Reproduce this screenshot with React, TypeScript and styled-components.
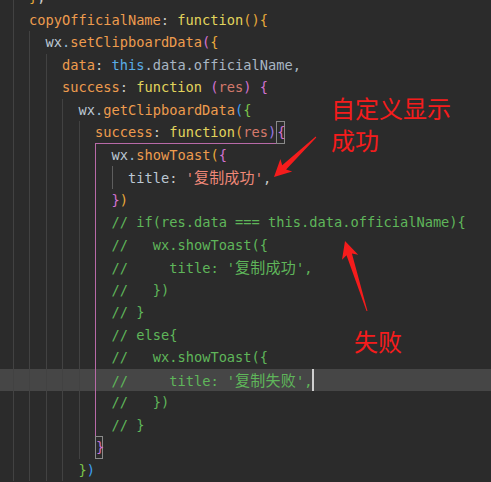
import React from 'react';
import styled, { createGlobalStyle } from 'styled-components';

// editor metrics taken from the screenshot: 8.25px per column, 22.5px per line
const COL = 8.25;
const LINE = 22.5;

const C = {
  prop: '#ee9c4e',
  id: '#bcc8d4',
  dot: '#8fb4d6',
  punc: '#c8c8c8',
  fn: '#e2d45c',
  self: '#59ace6',
  member: '#a8b6c4',
  param: '#d4796c',
  str: '#ef8878',
  cmt: '#5fb65a',
  gold: '#e8a93a',
  orchid: '#d272d2',
  blue: '#3d9ff2',
  green: '#7cc44a',
  violet: '#9a78e6',
};

const GlobalStyle = createGlobalStyle`
  html, body {
    margin: 0;
    padding: 0;
    background: #2b2b2b;
  }
`;

const Editor = styled.div`
  position: relative;
  width: 491px;
  height: 482px;
  overflow: hidden;
  background: #2b2b2b;
  font-family: "DejaVu Sans Mono", "Liberation Mono", "Noto Sans CJK SC", monospace;
  font-size: 13.7px;
  color: ${C.id};
`;

const Lines = styled.div`
  margin-top: -13.75px;
`;

const Row = styled.div<{ $current?: boolean }>`
  display: flex;
  height: ${LINE}px;
  padding-left: 12.5px;
  white-space: pre;
  background: ${p => (p.$current ? '#464646' : 'transparent')};
`;

const Indent = styled.span<{ $tone: 'plain' | 'bright' | 'pair' }>`
  flex: none;
  width: ${COL * 2}px;
  box-sizing: border-box;
  border-left: 1px solid
    ${p => (p.$tone === 'pair' ? '#b86aa8' : p.$tone === 'bright' ? '#5e5e5e' : '#424242')};
`;

const Code = styled.span`
  display: block;
  line-height: ${LINE}px;
`;

const T = styled.span<{ $c: string }>`
  color: ${p => p.$c};
`;

const Cjk = styled.span`
  font-family: "Noto Sans CJK SC", sans-serif;
  font-size: 15px;
  letter-spacing: 0.2px;
`;

const PairHead = styled.span`
  display: inline-block;
  vertical-align: top;
  height: ${LINE}px;
  box-sizing: border-box;
  border-bottom: 1px solid #b86aa8;
`;

const BracketBox = styled.span<{ $c: string }>`
  display: inline-block;
  vertical-align: top;
  width: ${COL}px;
  height: ${LINE}px;
  line-height: ${LINE - 2}px;
  box-sizing: border-box;
  border: 1px solid #8a8a8a;
  color: ${p => p.$c};
  text-align: center;
`;

const Caret = styled.span`
  display: inline-block;
  vertical-align: top;
  width: 2px;
  height: ${LINE}px;
  background: #cfcfcf;
`;

const Overlay = styled.div`
  position: absolute;
  inset: 0;
  pointer-events: none;
`;

const Note = styled.div<{ $x: number; $y: number }>`
  position: absolute;
  left: ${p => p.$x}px;
  top: ${p => p.$y}px;
  font-family: "Noto Sans CJK SC", sans-serif;
  font-size: 24px;
  line-height: 32px;
  color: #f51c1c;
  white-space: pre;
`;

const ArrowSvg = styled.svg`
  position: absolute;
  left: 0;
  top: 0;
`;

type Tone = 'plain' | 'bright' | 'pair';

function Line(props: { n: number; indent: number; current?: boolean; children: React.ReactNode }) {
  const units: Tone[] = [];
  for (let k = 0; k < props.indent / 2; k++) {
    if (k === 5 && props.n >= 7 && props.n <= 19) units.push('pair');
    else if (k === 6 && props.n === 8) units.push('bright');
    else units.push('plain');
  }
  return (
    <Row $current={props.current}>
      {units.map((tone, i) => <Indent key={i} $tone={tone} />)}
      <Code>{props.children}</Code>
    </Row>
  );
}

function arrow(x1: number, y1: number, x2: number, y2: number) {
  const dx = x2 - x1;
  const dy = y2 - y1;
  const len = Math.hypot(dx, dy);
  const ux = dx / len;
  const uy = dy / len;
  const pts: [number, number][] = [
    [0, 0.5], [len - 14, 2.8], [len - 17, 8.5], [len, 0],
    [len - 17, -8.5], [len - 14, -2.8], [0, -0.5],
  ];
  return pts.map(([a, b]) => `${(x1 + ux * a - uy * b).toFixed(1)},${(y1 + uy * a + ux * b).toFixed(1)}`).join(' ');
}

const Wx = ({ call }: { call: string }) => (
  <>
    <T $c={C.id}>wx</T><T $c={C.dot}>.</T><T $c={C.prop}>{call}</T>
  </>
);

export default function App() {
  return (
    <>
      <GlobalStyle />
      <Editor>
        <Lines>
          <Line n={0} indent={2}>
            <T $c={C.gold}>{'}'}</T><T $c={C.punc}>,</T>
          </Line>
          <Line n={1} indent={2}>
            <T $c={C.prop}>copyOfficialName</T><T $c={C.punc}>: </T><T $c={C.fn}>function</T>
            <T $c={C.gold}>(){'{'}</T>
          </Line>
          <Line n={2} indent={4}>
            <Wx call="setClipboardData" /><T $c={C.orchid}>(</T><T $c={C.gold}>{'{'}</T>
          </Line>
          <Line n={3} indent={6}>
            <T $c={C.prop}>data</T><T $c={C.punc}>: </T><T $c={C.self}>this</T>
            <T $c={C.member}>.data.officialName,</T>
          </Line>
          <Line n={4} indent={6}>
            <T $c={C.prop}>success</T><T $c={C.punc}>: </T><T $c={C.fn}>function</T> <T $c={C.orchid}>(</T>
            <T $c={C.param}>res</T><T $c={C.orchid}>)</T> <T $c={C.orchid}>{'{'}</T>
          </Line>
          <Line n={5} indent={8}>
            <Wx call="getClipboardData" /><T $c={C.blue}>(</T><T $c={C.green}>{'{'}</T>
          </Line>
          <Line n={6} indent={10}>
            <PairHead>
              <T $c={C.prop}>success</T><T $c={C.punc}>: </T><T $c={C.fn}>function</T><T $c={C.gold}>(</T>
              <T $c={C.param}>res</T><T $c={C.violet}>)</T>
            </PairHead>
            <BracketBox $c={C.orchid}>{'{'}</BracketBox>
          </Line>
          <Line n={7} indent={12}>
            <Wx call="showToast" /><T $c={C.gold}>(</T><T $c={C.orchid}>{'{'}</T>
          </Line>
          <Line n={8} indent={14}>
            <T $c={C.id}>title</T><T $c={C.punc}>: </T><T $c={C.str}>'<Cjk>复制成功</Cjk>'</T><T $c={C.punc}>,</T>
          </Line>
          <Line n={9} indent={12}>
            <T $c={C.orchid}>{'}'}</T><T $c={C.gold}>)</T>
          </Line>
          <Line n={10} indent={12}>
            <T $c={C.cmt}>{'// if(res.data === this.data.officialName){'}</T>
          </Line>
          <Line n={11} indent={12}>
            <T $c={C.cmt}>{'//   wx.showToast({'}</T>
          </Line>
          <Line n={12} indent={12}>
            <T $c={C.cmt}>{"//     title: '"}<Cjk>复制成功</Cjk>{"',"}</T>
          </Line>
          <Line n={13} indent={12}>
            <T $c={C.cmt}>{'//   })'}</T>
          </Line>
          <Line n={14} indent={12}>
            <T $c={C.cmt}>{'// }'}</T>
          </Line>
          <Line n={15} indent={12}>
            <T $c={C.cmt}>{'// else{'}</T>
          </Line>
          <Line n={16} indent={12}>
            <T $c={C.cmt}>{'//   wx.showToast({'}</T>
          </Line>
          <Line n={17} indent={12} current>
            <T $c={C.cmt}>{"//     title: '"}<Cjk>复制失败</Cjk>{"',"}</T>
            <Caret />
          </Line>
          <Line n={18} indent={12}>
            <T $c={C.cmt}>{'//   })'}</T>
          </Line>
          <Line n={19} indent={12}>
            <T $c={C.cmt}>{'// }'}</T>
          </Line>
          <Line n={20} indent={10}>
            <BracketBox $c={C.orchid}>{'}'}</BracketBox>
          </Line>
          <Line n={21} indent={8}>
            <T $c={C.green}>{'}'}</T><T $c={C.blue}>)</T>
          </Line>
        </Lines>

        <Overlay>
          <ArrowSvg width="491" height="482" viewBox="0 0 491 482">
            <polygon points={arrow(316, 137, 274, 177)} fill="#f51c1c" />
            <polygon points={arrow(367, 311, 345, 241)} fill="#f51c1c" />
          </ArrowSvg>
          <Note $x={331} $y={92}>{'自定义显示\n成功'}</Note>
          <Note $x={354} $y={325}>失败</Note>
        </Overlay>
      </Editor>
    </>
  );
}
